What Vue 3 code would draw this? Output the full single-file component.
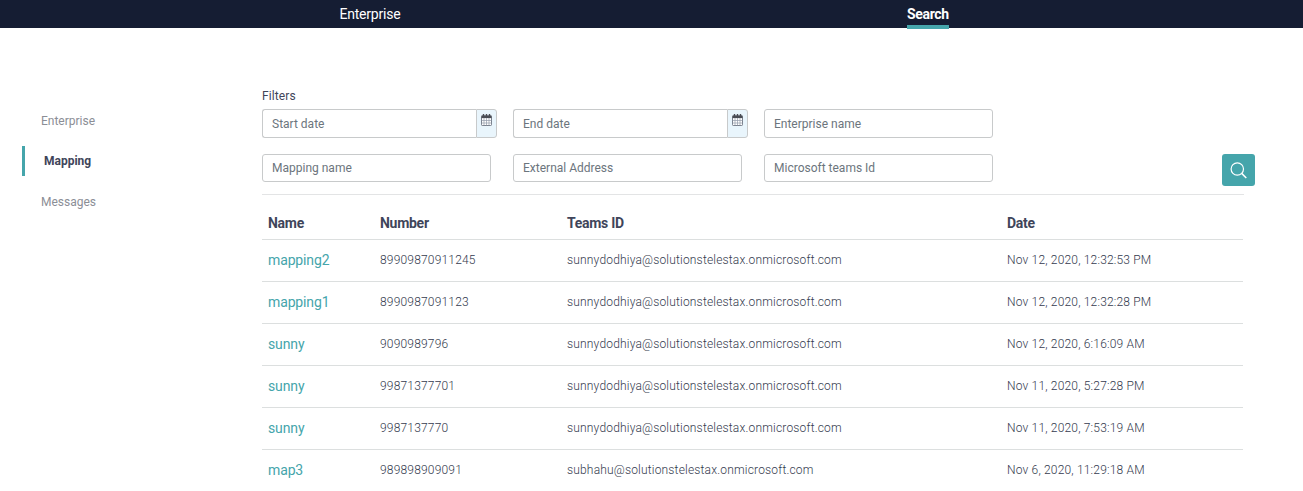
<script setup>
const menu = [
  { label: 'Enterprise', active: false },
  { label: 'Mapping', active: true },
  { label: 'Messages', active: false },
]

const filters = [
  { label: 'Start date', date: true },
  { label: 'End date', date: true },
  { label: 'Enterprise name', date: false },
  { label: 'Mapping name', date: false },
  { label: 'External Address', date: false },
  { label: 'Microsoft teams Id', date: false },
]

const user = 'sunnydodhiya@solutionstelestax.onmicrosoft.com'
const rows = [
  { name: 'mapping2', number: '89909870911245', team: user, date: 'Nov 12, 2020, 12:32:53 PM' },
  { name: 'mapping1', number: '8990987091123', team: user, date: 'Nov 12, 2020, 12:32:28 PM' },
  { name: 'sunny', number: '9090989796', team: user, date: 'Nov 12, 2020, 6:16:09 AM' },
  { name: 'sunny', number: '99871377701', team: user, date: 'Nov 11, 2020, 5:27:28 PM' },
  { name: 'sunny', number: '9987137770', team: user, date: 'Nov 11, 2020, 7:53:19 AM' },
  { name: 'map3', number: '989898909091', team: 'subhahu@solutionstelestax.onmicrosoft.com', date: 'Nov 6, 2020, 11:29:18 AM' },
]
</script>

<template>
  <div class="page">
    <header class="topbar">
      <a class="tab first">Enterprise</a>
      <a class="tab active">Search</a>
    </header>
    <div class="body">
      <nav class="side">
        <a v-for="m in menu" :key="m.label" class="side-item" :class="{ active: m.active }"><span>{{ m.label }}</span></a>
      </nav>
      <main class="content">
        <div class="filters-title">Filters</div>
        <div class="filter-bar">
          <div class="filters">
            <div v-for="f in filters" :key="f.label" class="field" :class="{ dated: f.date }">
              <input type="text" :placeholder="f.label" />
              <button v-if="f.date" class="calendar" aria-label="Open calendar">
                <svg width="11" height="12" viewBox="0 0 11 12">
                  <rect x="0.5" y="2" width="10" height="9.5" rx="0.8" fill="#fff" stroke="#6b7280" stroke-width="0.9" />
                  <path d="M0.5 1.5h10v2.6h-10z" fill="#4a4d55" />
                  <path d="M2.5 0v2.5M5.5 0v2.5M8.5 0v2.5" stroke="#4a4d55" stroke-width="1.4" />
                  <path d="M3 4v7.5M5.5 4v7.5M8 4v7.5M.5 6.5h10M.5 9h10" stroke="#929bab" stroke-width="0.7" />
                </svg>
              </button>
            </div>
          </div>
          <button class="search" aria-label="Search">
            <svg width="17" height="17" viewBox="0 0 17 17" fill="none" stroke="#fff" stroke-width="1.2">
              <circle cx="7.3" cy="7" r="6.2" />
              <path d="M11.7 11.4L16.3 16" stroke-width="1.5" />
            </svg>
          </button>
        </div>
        <hr class="rule" />
        <table class="results">
          <colgroup><col class="c1" /><col class="c2" /><col class="c3" /><col /></colgroup>
          <thead>
            <tr><th>Name</th><th>Number</th><th>Teams ID</th><th>Date</th></tr>
          </thead>
          <tbody>
            <tr v-for="(r, i) in rows" :key="i">
              <td class="name">{{ r.name }}</td>
              <td>{{ r.number }}</td>
              <td>{{ r.team }}</td>
              <td>{{ r.date }}</td>
            </tr>
          </tbody>
        </table>
      </main>
    </div>
  </div>
</template>

<style>
body {
  background: #fff;
}
</style>

<style scoped>
.page {
  height: 491px;
  overflow: hidden;
  font-family: Roboto, "Liberation Sans", sans-serif;
  color: #3f455a;
}
.page *,
.page {
  box-sizing: border-box;
}
.topbar {
  height: 28px;
  background: #151d33;
  display: flex;
  padding-left: 339px;
}
.tab {
  height: 29px;
  color: #fff;
  font-size: 14px;
  line-height: 28px;
  letter-spacing: -0.2px;
}
.tab.first {
  width: 568px;
  padding-left: 0.4px;
}
.tab.active {
  font-weight: 700;
  letter-spacing: -0.33px;
  border-bottom: 4px solid #45a5ab;
}
.body {
  display: flex;
}
.side {
  width: 262px;
  padding: 78px 0 0 22px;
  display: flex;
  flex-direction: column;
}
.side-item {
  height: 30px;
  margin-bottom: 11px;
  padding-left: 19px;
  font-size: 12px;
  line-height: 30px;
  color: #8b8e96;
}
.side-item:first-child {
  margin-bottom: 10px;
}
.side-item.active {
  border-left: 3px solid #45a5ab;
  color: #3f455a;
  font-weight: 700;
}
.content {
  width: 993px;
  padding-top: 60px;
}
.filters-title {
  height: 21px;
  font-size: 12px;
  line-height: 16px;
  letter-spacing: 0.1px;
}
.filter-bar {
  width: 993px;
  height: 85px;
  display: flex;
  justify-content: space-between;
  align-items: flex-start;
}
.filters {
  display: grid;
  grid-template-columns: 229px 229px 229px;
  grid-template-rows: 29px 28px;
  column-gap: 22px;
  row-gap: 16px;
}
.field {
  display: flex;
}
.field.dated {
  width: 235px;
}
input {
  width: 100%;
  min-width: 0;
  height: 100%;
  margin: 0;
  padding: 0 9px;
  border: 1px solid #c8cacb;
  border-radius: 3px;
  background: #fff;
  font-family: inherit;
  font-size: 12px;
}
input::placeholder {
  color: #6c757d;
  opacity: 1;
}
.dated input {
  border-right: 0;
  border-radius: 3px 0 0 3px;
}
button {
  margin: 0;
  padding: 0;
  display: flex;
}
.calendar {
  flex: 0 0 21px;
  height: 100%;
  padding: 4px 0 0 4px;
  border: 1px solid #c8cacb;
  border-radius: 0 3px 3px 0;
  background: #e9f5fc;
}
.search {
  width: 33px;
  height: 32px;
  margin-top: 45px;
  align-items: center;
  justify-content: center;
  border: 0;
  border-radius: 3px;
  background: #45a5ab;
}
.rule {
  width: 982px;
  height: 1px;
  margin: 0;
  border: 0;
  background: #e3e4e5;
}
.results {
  width: 981px;
  table-layout: fixed;
  border-collapse: collapse;
  text-align: left;
}
.c1 { width: 112px; }
.c2 { width: 187px; }
.c3 { width: 440px; }
th {
  height: 44px;
  padding: 13px 6px 0;
  font-size: 14px;
  line-height: 18px;
  font-weight: 700;
  letter-spacing: -0.28px;
}
td {
  height: 42px;
  padding: 0 6px 1px;
  border-top: 1px solid #dcdfdf;
  font-size: 12px;
  font-weight: 300;
  letter-spacing: 0.18px;
  color: #343a4e;
}
td.name {
  color: #45a5ab;
  font-size: 14px;
  font-weight: 400;
  letter-spacing: -0.13px;
}
</style>
